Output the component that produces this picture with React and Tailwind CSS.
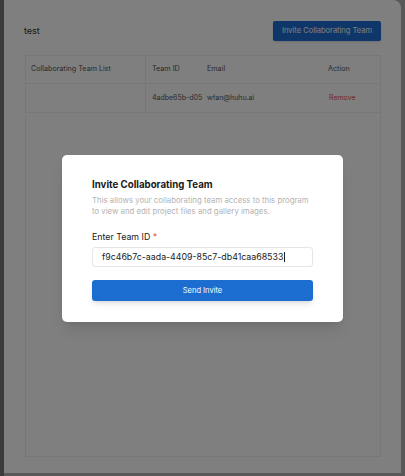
import React from 'react';

const rows = [
  { teamId: '4adbe65b-d05', email: 'wfan@huhu.ai' },
];

const App = () => {
  return (
    <div className="relative w-[405px] h-[476px] overflow-hidden bg-[#b0b0b0] flex font-['Inter',sans-serif]">
      {/* Left strip */}
      <div className="w-[4px] h-full bg-[#767676] flex-shrink-0" />

      {/* Page */}
      <div className="flex-1 h-[473px] mr-[4px] bg-white rounded-tr-[8px] px-5 pt-[21px] pb-[16px] flex flex-col">
        <div className="flex items-center justify-between h-[20px]">
          <span className="text-[9px] text-[#333]">test</span>
          <button className="h-[20px] px-[9px] bg-[#1c6dd0] text-white text-[7.5px] rounded-[2px] shadow">
            Invite Collaborating Team
          </button>
        </div>

        {/* Table */}
        <div className="mt-[14px] ml-px flex-1 border border-[#eeeeee] flex flex-col">
          <div className="flex h-[28px] border-b border-[#eeeeee] text-[7.2px] text-[#555]">
            <div className="w-[120px] border-r border-[#eeeeee] flex items-center pl-[5px]">Collaborating Team List</div>
            <div className="w-[55px] flex items-center pl-[6px]">Team ID</div>
            <div className="w-[121px] flex items-center pl-[6px]">Email</div>
            <div className="flex-1 flex items-center pl-[6px]">Action</div>
          </div>
          {rows.map((row) => (
            <div key={row.teamId} className="flex h-[29px] border-b border-[#eeeeee] text-[7px] text-[#555]">
              <div className="w-[120px] border-r border-[#eeeeee]" />
              <div className="w-[55px] flex items-center pl-[6px] whitespace-nowrap">{row.teamId}</div>
              <div className="w-[121px] flex items-center pl-[6px]">{row.email}</div>
              <div className="flex-1 flex items-center pl-[7px] text-[#e24c4c]">Remove</div>
            </div>
          ))}
        </div>
      </div>

      {/* Overlay */}
      <div className="absolute inset-0 bg-black/50" />

      {/* Modal */}
      <div className="absolute left-[62px] top-[155px] w-[281px] h-[167px] bg-white rounded-[5px] shadow-lg px-[30px] pt-[22px]">
        <h2 className="text-[9.7px] leading-[16px] font-bold text-[#1a1a1a]">Invite Collaborating Team</h2>
        <p className="mt-[2px] text-[7.8px] leading-[11px] text-[#b3b3b3]">
          This allows your collaborating team access to this program to view and edit project files and gallery images.
        </p>
        <label className="block mt-[14px] text-[8.8px] leading-[12px] text-[#222]">
          Enter Team ID <span className="text-[#e24c4c]">*</span>
        </label>
        <div className="mt-[4px] h-[20px] border border-[#e6e6e6] rounded-[3px] flex items-center pl-[9px] text-[8.8px] text-[#222]">
          f9c46b7c-aada-4409-85c7-db41caa68533<span className="inline-block w-px h-[10px] bg-[#222] ml-px" />
        </div>
        <button className="mt-[13px] w-full h-[21px] bg-[#1c6dd0] rounded-[3px] text-white text-[7.5px] shadow-md">
          Send Invite
        </button>
      </div>
    </div>
  );
};

export default App;
